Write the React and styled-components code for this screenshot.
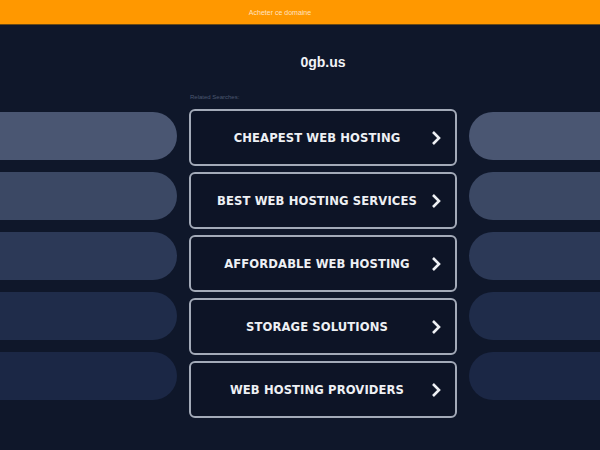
import styled, { createGlobalStyle } from "styled-components";

const GlobalStyle = createGlobalStyle`
    body {
        margin : 0;
        background : #0f172a;
        overflow : hidden;
        font-family : "DejaVu Sans", Verdana, sans-serif;
    }
`;

const TopBar = styled.div`
    height : 24px;
    background : #ff9800;
    border-bottom : 1px solid #6b4a14;
    display : flex;
    align-items : center;
    justify-content : center;
    padding-right : 40px;
    font-family : "Liberation Sans", Arial, sans-serif;
    font-size : 7px;
    color : rgba(255,255,255,0.75);
`;

const Stage = styled.div`
    display : grid;
    grid-template-columns : 177px 268px 1fr;
    column-gap : 12px;
    height : 425px;
`;

const SideColumn = styled.div`
    display : flex;
    flex-direction : column;
    gap : 12px;
    padding-top : 87px;
`;

const Pill = styled.div`
    height : 48px;
    background : ${(p) => p.$color};
    border-radius : ${(p) => (p.$side === "left" ? "0 24px 24px 0" : "24px 0 0 24px")};
`;

const Center = styled.div`
    display : flex;
    flex-direction : column;
`;

const Title = styled.h1`
    margin : 27px 0 0;
    font-family : "Liberation Sans", Arial, sans-serif;
    font-size : 14px;
    line-height : 20px;
    font-weight : bold;
    color : #f1f3f7;
    text-align : center;
`;

const Label = styled.div`
    margin : 20px 0 7px 1px;
    font-family : "Liberation Sans", Arial, sans-serif;
    font-size : 6px;
    line-height : 10px;
    color : #4c5870;
`;

const List = styled.div`
    display : flex;
    flex-direction : column;
    gap : 6px;
`;

const Button = styled.a`
    position : relative;
    height : 57px;
    box-sizing : border-box;
    border : 2px solid #a3aab8;
    border-radius : 6px;
    background : #0d1426;
    display : flex;
    align-items : center;
    justify-content : center;
    padding : 0 28px 0 16px;
    font-size : 11.6px;
    font-weight : bold;
    color : #eef0f4;
    letter-spacing : 0.1px;
    text-decoration : none;
    text-transform : uppercase;
`;

const Chevron = styled.svg`
    position : absolute;
    right : 14px;
    top : 50%;
    transform : translateY(-50%);
`;

const pillColors = ["#4a5672", "#3b4864", "#2c3957", "#1f2c4a", "#1b2745"];

const links = [
    "Cheapest Web Hosting",
    "Best Web Hosting Services",
    "Affordable Web Hosting",
    "Storage Solutions",
    "Web Hosting Providers",
];

const App = () => {
    return (
        <>
            <GlobalStyle />
            <TopBar>Acheter ce domaine</TopBar>
            <Stage>
                <SideColumn>
                    {pillColors.map((c, i) => (
                        <Pill key={i} $color={c} $side="left" />
                    ))}
                </SideColumn>
                <Center>
                    <Title>0gb.us</Title>
                    <Label>Related Searches:</Label>
                    <List>
                        {links.map((l) => (
                            <Button key={l} href="#">
                                {l}
                                <Chevron width="10" height="16" viewBox="0 0 10 16">
                                    <polyline points="2,2 8,8 2,14" fill="none" stroke="#eef0f4" strokeWidth="2.6" />
                                </Chevron>
                            </Button>
                        ))}
                    </List>
                </Center>
                <SideColumn>
                    {pillColors.map((c, i) => (
                        <Pill key={i} $color={c} $side="right" />
                    ))}
                </SideColumn>
            </Stage>
        </>
    );
};

export default App;
